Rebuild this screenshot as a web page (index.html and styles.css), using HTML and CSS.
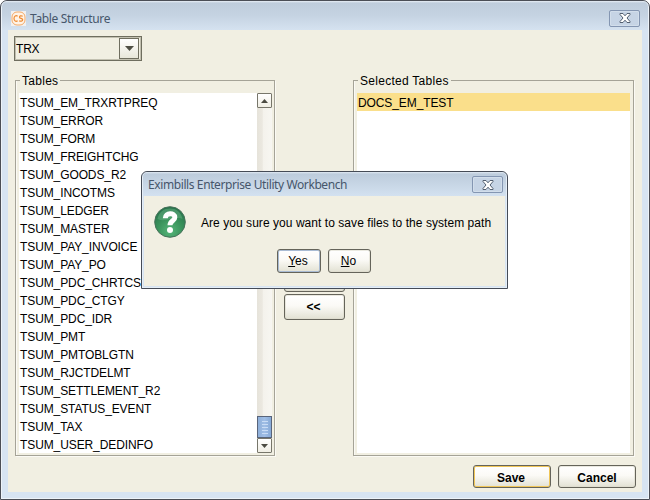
FILE: index.html
```html
<!DOCTYPE html>
<html lang="en">
<head>
<meta charset="utf-8">
<title>Table Structure</title>
<link rel="stylesheet" href="styles.css">
</head>
<body>
<div class="window">
  <header class="titlebar">
    <svg class="app-icon" width="15" height="15" viewBox="0 0 15 15">
      <rect width="15" height="15" fill="#f2f1f0"/>
      <rect x="1" y="1" width="13" height="13" rx="5" fill="#fff3e6" stroke="#f3a967"/>
      <path d="M6.600 5.300C5 4 3 5 3 7.500C3 10 5 11 6.600 9.700M11.700 5.200C10 4.300 8.300 5 8.500 6.300C8.700 7.700 11.700 7.200 11.700 8.800C11.700 10.300 9.500 10.500 8.200 9.700" fill="none" stroke="#ef8c35" stroke-width="1.200"/>
    </svg>
    <span class="title">Table Structure</span>
    <button class="close" aria-label="Close"><svg width="12" height="10" viewBox="0 0 12 10"><path d="M1 .5h3l2 2.300L8 .5h3v1L8 5l3 3.500v1H8L6 7.200 4 9.500H1v-1L4 5 1 1.500z" fill="#fff" stroke="#535f70"/></svg></button>
  </header>
  <main class="content">
    <div class="combo"><span>TRX</span><div class="combo-arrow"><svg width="9" height="5"><path d="M0 0h9L4.500 5z" fill="#4f4f45"/></svg></div></div>
    <div class="columns">
      <fieldset class="group tables">
        <legend>Tables</legend>
        <div class="list-wrap">
          <ul class="list">
            <li>TSUM_EM_TRXRTPREQ</li><li>TSUM_ERROR</li><li>TSUM_FORM</li><li>TSUM_FREIGHTCHG</li><li>TSUM_GOODS_R2</li><li>TSUM_INCOTMS</li><li>TSUM_LEDGER</li><li>TSUM_MASTER</li><li>TSUM_PAY_INVOICE</li><li>TSUM_PAY_PO</li><li>TSUM_PDC_CHRTCS</li><li>TSUM_PDC_CTGY</li><li>TSUM_PDC_IDR</li><li>TSUM_PMT</li><li>TSUM_PMTOBLGTN</li><li>TSUM_RJCTDELMT</li><li>TSUM_SETTLEMENT_R2</li><li>TSUM_STATUS_EVENT</li><li>TSUM_TAX</li><li>TSUM_USER_DEDINFO</li>
          </ul>
          <div class="scrollbar">
            <div class="scroll-btn"><svg width="7" height="4"><path d="M0 4h7L3.500 0z" fill="#4b4b42"/></svg></div>
            <div class="track"></div>
            <div class="thumb"><i></i><i></i><i></i><i></i><i></i></div>
            <div class="scroll-btn"><svg width="7" height="4"><path d="M0 0h7L3.500 4z" fill="#4b4b42"/></svg></div>
          </div>
        </div>
      </fieldset>
      <div class="movers"><button class="btn mover"></button><button class="btn mover">&lt;&lt;</button></div>
      <fieldset class="group selected">
        <legend>Selected Tables</legend>
        <div class="list-wrap"><ul class="list"><li class="on">DOCS_EM_TEST</li></ul></div>
      </fieldset>
    </div>
    <footer class="actions"><button class="btn default">Save</button><button class="btn">Cancel</button></footer>
  </main>
</div>
<section class="dialog" role="dialog">
  <header class="dialog-title">
    <span class="title">Eximbills Enterprise Utility Workbench</span>
    <button class="close" aria-label="Close"><svg width="12" height="10" viewBox="0 0 12 10"><path d="M1 .5h3l2 2.300L8 .5h3v1L8 5l3 3.500v1H8L6 7.200 4 9.500H1v-1L4 5 1 1.500z" fill="#fff" stroke="#535f70"/></svg></button>
  </header>
  <div class="dialog-body">
    <div class="message">
      <svg width="32" height="32" viewBox="0 0 32 32">
        <defs><radialGradient id="g" cx=".5" cy=".8" r=".8"><stop offset="0" stop-color="#56b579"/><stop offset=".5" stop-color="#3a935c"/><stop offset="1" stop-color="#26704a"/></radialGradient></defs>
        <circle cx="16" cy="16" r="15.300" fill="url(#g)" stroke="#47715a"/>
        <path d="M3.500 13C5 5.500 10 2.500 16 2.500S27 5.500 28.500 13C20 9 12 17 3.500 13z" fill="#6db587" opacity=".45"/>
        <path d="M11.300 12.200C11.300 6.400 20.800 6.200 20.800 11.400C20.800 15 16 14.700 16 19.300" fill="none" stroke="#fff" stroke-width="5"/>
        <circle cx="16" cy="23.900" r="3" fill="#fff"/>
      </svg>
      <span>Are you sure you want to save files to the system path</span>
    </div>
    <div class="answers"><button class="btn answer focus"><span><u>Y</u>es</span></button><button class="btn answer no"><span><u>N</u>o</span></button></div>
  </div>
</section>
</body>
</html>
```
FILE: styles.css
```css
* { box-sizing: border-box; }
html { background: #fff; }
body { margin: 0; width: 650px; height: 500px; overflow: hidden; font: 12px/18px "Liberation Sans", Arial, sans-serif; color: #000; }
svg { display: block; flex: none; }
ul { list-style: none; margin: 0; padding: 0; }
button { font: inherit; color: inherit; padding: 0; margin: 0; }

.window { height: 500px; border: 1px solid #4b4e56; border-radius: 7px 7px 0 0; background: #d7e4f2; box-shadow: inset 0 0 0 1px #edf3f9; padding: 0 7px 7px; display: flex; flex-direction: column; }
.titlebar { height: 29px; flex: none; margin: 0 -6px; padding: 5px 8px 0 9px; display: flex; align-items: center; border-radius: 6px 6px 0 0; background: linear-gradient(#e8eff6 0, #bfcddc 2px, #c5d3e2 50%, #d5e2f0); }
.title { font: 12px/16px "Noto Sans", "Open Sans", sans-serif; color: #46566b; white-space: nowrap; }
.titlebar .title { margin: 2px 0 0 4px; letter-spacing: -.33px; }
.close { margin-left: auto; width: 31px; height: 17px; border: 1px solid #8496b2; border-radius: 2px; background: #c6d4e5; display: flex; align-items: center; justify-content: center; box-shadow: inset 0 0 0 1px #d2deeb; }
.content { flex: 1; background: #f1efe2; padding: 6px 8px 0 6px; display: flex; flex-direction: column; }

.combo { width: 128px; height: 25px; border: 1px solid #6f6e5f; box-shadow: inset 0 0 0 1px #c2c0b0; display: flex; align-items: center; justify-content: space-between; padding: 0 2px 0 1px; flex: none; }
.combo span { letter-spacing: -.2px; padding-top: 1px; }
.combo-arrow { width: 20px; height: 21px; border: 1px solid #6f6e5f; background: linear-gradient(#fff, #e8e7da); display: flex; align-items: center; justify-content: center; }

.columns { display: flex; margin: 11px 0 0 1px; height: 384px; flex: none; }
.group { position: relative; min-width: 0; margin: 0; padding: 0 2px 2px 3px; border: 1px solid #a5a397; box-shadow: inset 1px 0 #fbfaf4, 1px 1px #fbfaf4; height: 384px; }
.group legend { padding: 0 2px; margin-left: 1px; line-height: 18px; height: 16px; letter-spacing: .28px; }
.tables { width: 260px; }
.selected { width: 281px; padding-right: 3px; }
.list-wrap { display: flex; height: 360px; margin-top: 5px; background: #fff; }
.list { flex: 1; letter-spacing: -.1px; white-space: nowrap; }
.list li { height: 18px; padding-left: 1px; line-height: 20px; }
.list .on { background: #fadf8b; }

.scrollbar { width: 15px; display: flex; flex-direction: column; background: linear-gradient(90deg, #e6e3da 0, #ebe8e0 35%, #f4f2ec 42%, #f7f6f1); }
.scroll-btn { height: 15px; border: 1px solid #77766a; border-radius: 1px; background: linear-gradient(#fff, #f0eee4); display: flex; align-items: center; justify-content: center; }
.track { flex: 1; }
.thumb { height: 22px; border: 1px solid #59647a; background: linear-gradient(90deg, #8eafd9, #a0bee6 50%, #86a9d7); padding: 4px 3px 0 4px; }
.thumb i { display: block; height: 1px; margin-bottom: 2px; background: #c9dcf5; }

.movers { width: 78px; padding: 194px 8px 0 9px; display: flex; flex-direction: column; gap: 2px; }
.btn { height: 23px; border: 1px solid #65645a; border-radius: 3px; background: linear-gradient(#fff, #fbfaf6 45%, #e2e1d3); font-weight: bold; display: flex; align-items: center; justify-content: center; box-shadow: inset 0 0 0 1px rgba(220,218,203,.6); }
.mover { height: 26px; flex: none; padding-right: 2px; }
.actions { display: flex; justify-content: flex-end; gap: 7px; margin: 9px -2px 0 0; }
.actions .btn { width: 78px; padding-top: 2px; }
.actions .default { box-shadow: inset 0 0 0 1px #f0c658; padding-right: 2px; }

.dialog { position: absolute; left: 141px; top: 171px; width: 367px; height: 118px; border: 1px solid #454b56; border-radius: 6px 6px 0 0; background: #d7e4f2; padding: 0 2px 2px; box-shadow: inset 0 0 0 1px #e5eef7; }
.dialog-title { height: 24px; display: flex; align-items: center; padding: 1px 3px 0 5px; margin: 0 -1px; background: linear-gradient(#e1eaf3 0, #bdccdc 2px, #d3e1f0); border-radius: 5px 5px 0 0; }
.dialog .title { letter-spacing: -.4px; padding-top: 1px; }
.dialog-body { height: 90px; background: #f1efe2; padding: 10px 10px 0; }
.message { display: flex; align-items: center; gap: 15px; white-space: nowrap; }
.message span { letter-spacing: .05px; padding-top: 2px; }
.answers { display: flex; justify-content: center; gap: 7px; margin-top: 11px; padding-right: 1px; }
.answer { width: 44px; height: 24px; font-weight: normal; }
.no { width: 43px; padding-right: 2px; }
.focus { box-shadow: inset 0 0 0 1px #a9bbd3; padding-right: 2px; }
```
